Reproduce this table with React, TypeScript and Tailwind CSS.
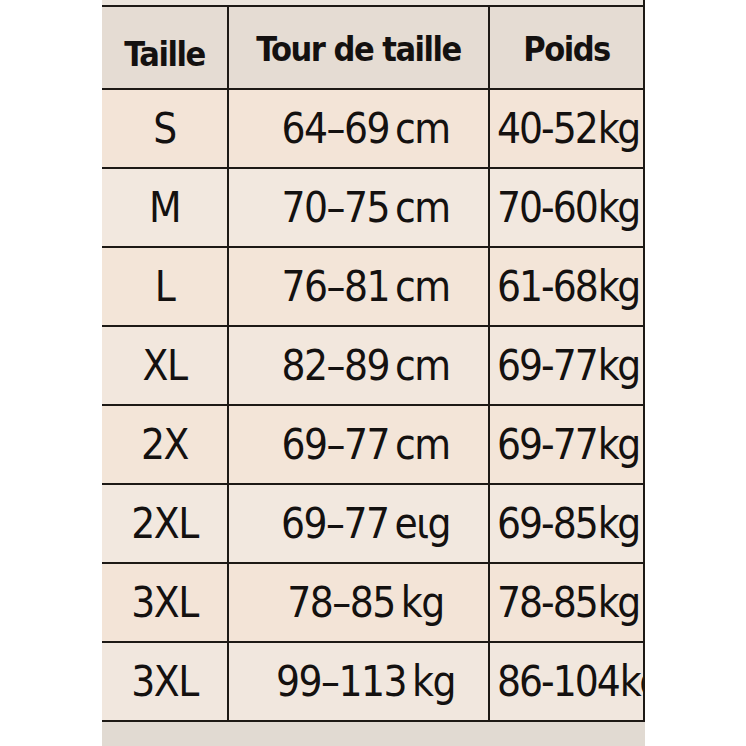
const rows = [
  { size: "S", waist: "64–69", unit: "cm", weight: "40-52", bg: "bg-[#f3e4d7]" },
  { size: "M", waist: "70–75", unit: "cm", weight: "70-60", bg: "bg-[#f2e8df]" },
  { size: "L", waist: "76–81", unit: "cm", weight: "61-68", bg: "bg-[#f3e5d8]" },
  { size: "XL", waist: "82–89", unit: "cm", weight: "69-77", bg: "bg-[#f2e7dd]" },
  { size: "2X", waist: "69–77", unit: "cm", weight: "69-77", bg: "bg-[#f3e5d8]" },
  { size: "2XL", waist: "69–77", unit: "eιg", weight: "69-85", bg: "bg-[#f2e8df]" },
  { size: "3XL", waist: "78–85", unit: "kg", weight: "78-85", bg: "bg-[#f3e4d7]" },
  { size: "3XL", waist: "99–113", unit: "kg", weight: "86-104", bg: "bg-[#f1e7de]" },
];

const font = "font-['DejaVu_Sans_Condensed','DejaVu_Sans',sans-serif]";

export default function App() {
  return (
    <div className="w-[746px] h-[746px] bg-white overflow-hidden">
      <div className={`ml-[102px] w-[543px] text-[#141110] ${font}`}>
        {/* strip above the table */}
        <div className="h-[5px] bg-[#ece5dd] border-r-2 border-[#1d1915]" />

        {/* header */}
        <div className="flex h-[85px] bg-[#e5dcd3] border-y-2 border-[#1d1915] font-bold text-[34px] tracking-[-1.5px]">
          <div className="w-[127px] border-r-2 border-[#1d1915] flex items-center justify-center pt-[14px]">
            Taille
          </div>
          <div className="w-[261px] border-r-2 border-[#1d1915] flex items-center justify-center pt-[4px]">
            Tour de taille
          </div>
          <div className="w-[155px] border-r-2 border-[#1d1915] flex items-center justify-center pt-[4px]">
            Poids
          </div>
        </div>

        {/* body */}
        {rows.map((r, i) => (
          <div
            key={i}
            className={`flex h-[79px] border-b-2 border-[#1d1915] text-[42px] tracking-[-1.5px] ${r.bg}`}
          >
            <div className="w-[127px] border-r-2 border-[#1d1915] flex items-center justify-center">
              {r.size}
            </div>
            <div className="w-[261px] border-r-2 border-[#1d1915] flex items-center justify-center pl-[14px] gap-[6px] whitespace-nowrap">
              <span>{r.waist}</span>
              <span>{r.unit}</span>
            </div>
            <div className="w-[155px] border-r-2 border-[#1d1915] flex items-center pl-[7px] gap-[1px] overflow-hidden whitespace-nowrap tracking-[-2px]">
              <span>{r.weight}</span>
              <span className="tracking-[-2.5px]">kg</span>
            </div>
          </div>
        ))}

        {/* strip below the table */}
        <div className="h-[30px] bg-[#e1dad2]" />
      </div>
    </div>
  );
}
